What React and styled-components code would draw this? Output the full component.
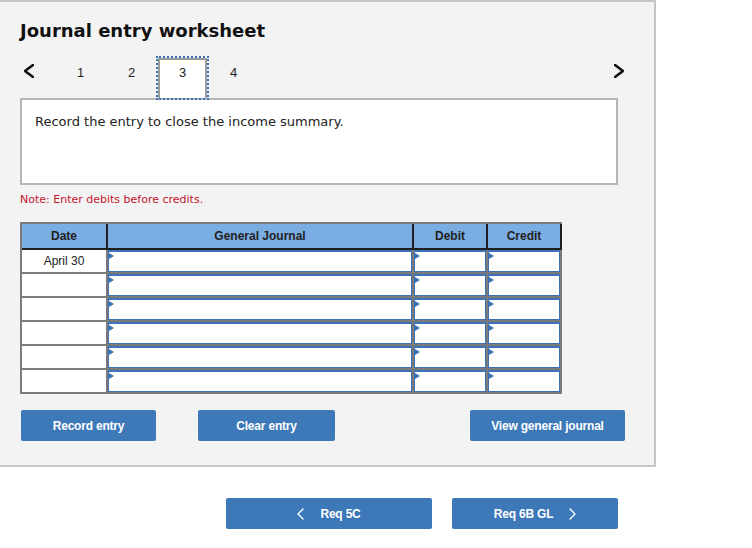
import React from 'react'
import styled, { createGlobalStyle } from 'styled-components'

const GlobalStyle = createGlobalStyle`
  body {
    margin: 0;
    background: #ffffff;
    font-family: "DejaVu Sans", Verdana, sans-serif;
  }
`

const Panel = styled.div`
  width: 634px;
  background: #f3f3f3;
  border-top: 2px solid #c6c6c6;
  border-right: 2px solid #c6c6c6;
  border-bottom: 2px solid #c6c6c6;
  padding: 0 0 24px 20px;
`

const Title = styled.h1`
  margin: 18px 0 0 0;
  font-size: 18px;
  line-height: 22px;
  font-weight: bold;
  color: #111;
`

const TabRow = styled.div`
  display: flex;
  align-items: flex-start;
  height: 42px;
  width: 604px;
  margin-top: 15px;
  position: relative;
  z-index: 1;
`

const ArrowBox = styled.div`
  width: 35px;
  height: 42px;
  display: flex;
  align-items: flex-start;
  justify-content: ${p => (p.$right ? 'flex-end' : 'flex-start')};
  padding: 7px 0 0 ${p => (p.$right ? '0' : '4px')};
  box-sizing: border-box;
  margin-left: ${p => (p.$right ? 'auto' : '0')};
`

const Tab = styled.div`
  width: ${p => (p.$active ? '49px' : '51px')};
  height: ${p => (p.$active ? '40px' : '42px')};
  margin: ${p => (p.$active ? '1px' : '0')};
  box-sizing: border-box;
  display: flex;
  align-items: flex-start;
  justify-content: center;
  padding-top: ${p => (p.$active ? '5px' : '6px')};
  font-family: "Liberation Sans", Arial, sans-serif;
  font-size: 13px;
  line-height: 15px;
  color: #222;
  background: ${p => (p.$active ? '#fff' : 'transparent')};
  border: 2px solid ${p => (p.$active ? '#9a9a9a' : 'transparent')};
  border-bottom: none;
  outline: ${p => (p.$active ? '2px dotted #3a72b8' : 'none')};
  outline-offset: 0;
`

const Prompt = styled.div`
  width: 598px;
  height: 87px;
  margin-top: -1px;
  background: #fff;
  border: 2px solid #b6b6b6;
  padding: 14px 0 0 13px;
  box-sizing: border-box;
  font-size: 13px;
  line-height: 16px;
  color: #222;
`

const Note = styled.div`
  margin-top: 8px;
  font-size: 11px;
  line-height: 14px;
  color: #c2162d;
`

const Table = styled.div`
  width: 540px;
  margin-top: 15px;
  border-top: 2px solid #7b7b7b;
  border-left: 2px solid #7b7b7b;
  border-bottom: 2px solid #7b7b7b;
  font-family: "Liberation Sans", Arial, sans-serif;
  font-size: 12px;
`

const HeadRow = styled.div`
  display: grid;
  grid-template-columns: 84px 304px 72px 72px;
  column-gap: 2px;
  background: #1e1e1e;
  padding: 0 2px 2px 0;
`

const HeadCell = styled.div`
  height: 24px;
  background: #7aade2;
  display: flex;
  align-items: center;
  justify-content: center;
  font-weight: bold;
  color: #222;
`

const Body = styled.div`
  display: grid;
  grid-template-columns: 84px 304px 72px 72px;
  gap: 2px;
  background: #7b7b7b;
  padding-right: 2px;
`

const DateCell = styled.div`
  height: 22px;
  background: #fff;
  display: flex;
  align-items: center;
  justify-content: center;
  color: #222;
`

const InputCell = styled.div`
  height: 22px;
  box-sizing: border-box;
  background: #fff;
  border: 1px solid #3b73b6;
  border-top-width: 2px;
  position: relative;

  &::before {
    content: '';
    position: absolute;
    left: 0;
    top: 1px;
    border-left: 5px solid #3b73b6;
    border-top: 3.5px solid transparent;
    border-bottom: 3.5px solid transparent;
  }
`

const ButtonRow = styled.div`
  display: flex;
  width: 604px;
  margin-top: 16px;
  padding-left: 1px;
  gap: 42px;
`

const Button = styled.button`
  width: ${p => p.$w}px;
  height: 31px;
  margin-left: ${p => (p.$push ? 'auto' : '0')};
  background: #3d78b8;
  border: none;
  border-radius: 2px;
  color: #fff;
  font-family: "Liberation Sans", Arial, sans-serif;
  font-weight: bold;
  font-size: 12px;
  letter-spacing: -0.2px;
  display: flex;
  align-items: center;
  justify-content: center;
  gap: 16px;
  padding: 0;
`

const NavRow = styled.div`
  display: flex;
  justify-content: flex-end;
  gap: 20px;
  width: 618px;
  margin-top: 31px;
`

function Chevron({ dir, color, w, h, sw }) {
  const pts = dir === 'left' ? `${w - 1},1 1,${h / 2} ${w - 1},${h - 1}` : `1,1 ${w - 1},${h / 2} 1,${h - 1}`
  return (
    <svg width={w} height={h} viewBox={`0 0 ${w} ${h}`}>
      <polyline points={pts} fill="none" stroke={color} strokeWidth={sw} strokeLinecap="round" strokeLinejoin="round" />
    </svg>
  )
}

const rows = ['April 30', '', '', '', '', '']

export default function App() {
  return (
    <>
      <GlobalStyle />
      <Panel>
        <Title>Journal entry worksheet</Title>
        <TabRow>
          <ArrowBox>
            <Chevron dir="left" color="#111" w={10} h={14} sw={2.6} />
          </ArrowBox>
          {[1, 2, 3, 4].map(n => (
            <Tab key={n} $active={n === 3}>{n}</Tab>
          ))}
          <ArrowBox $right>
            <Chevron dir="right" color="#111" w={10} h={14} sw={2.6} />
          </ArrowBox>
        </TabRow>
        <Prompt>Record the entry to close the income summary.</Prompt>
        <Note>Note: Enter debits before credits.</Note>
        <Table>
          <HeadRow>
            <HeadCell>Date</HeadCell>
            <HeadCell>General Journal</HeadCell>
            <HeadCell>Debit</HeadCell>
            <HeadCell>Credit</HeadCell>
          </HeadRow>
          <Body>
            {rows.map((d, i) => (
              <React.Fragment key={i}>
                <DateCell>{d}</DateCell>
                <InputCell />
                <InputCell />
                <InputCell />
              </React.Fragment>
            ))}
          </Body>
        </Table>
        <ButtonRow>
          <Button $w={135}>Record entry</Button>
          <Button $w={137}>Clear entry</Button>
          <Button $w={155} $push>View general journal</Button>
        </ButtonRow>
      </Panel>
      <NavRow>
        <Button $w={206}>
          <Chevron dir="left" color="#fff" w={7} h={12} sw={1.4} />
          Req 5C
        </Button>
        <Button $w={166}>
          Req 6B GL
          <Chevron dir="right" color="#fff" w={7} h={12} sw={1.4} />
        </Button>
      </NavRow>
    </>
  )
}
